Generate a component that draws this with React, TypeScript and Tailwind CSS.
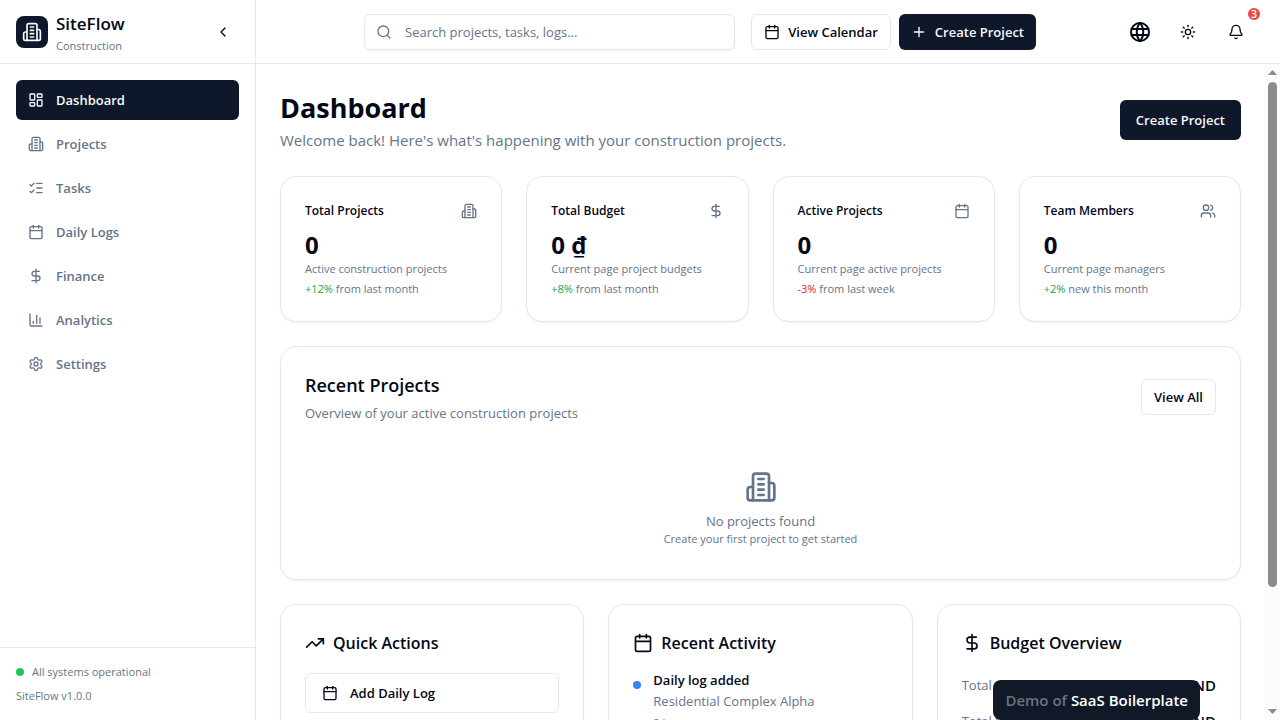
import type { ReactNode } from "react";
import {
  Bell,
  Calendar,
  ChartColumn,
  ChevronLeft,
  DollarSign,
  LayoutDashboard,
  ListChecks,
  Plus,
  Search,
  Settings,
  Sun,
  TrendingUp,
  Users,
} from "lucide-react";
import { TbWorld } from "react-icons/tb";

function Building({ className }: { className?: string }) {
  return (
    <svg
      className={className}
      viewBox="0 0 24 24"
      fill="none"
      stroke="currentColor"
      strokeWidth="2"
      strokeLinecap="round"
      strokeLinejoin="round"
      aria-hidden="true"
    >
      <path d="M6 22V4a2 2 0 0 1 2-2h8a2 2 0 0 1 2 2v18Z" />
      <path d="M6 12H4a2 2 0 0 0-2 2v6a2 2 0 0 0 2 2h2" />
      <path d="M18 9h2a2 2 0 0 1 2 2v9a2 2 0 0 1-2 2h-2" />
      <path d="M10 6h4M10 10h4M10 14h4M10 18h4" />
    </svg>
  );
}

const navItems = [
  { label: "Dashboard", icon: LayoutDashboard, active: true },
  { label: "Projects", icon: Building },
  { label: "Tasks", icon: ListChecks },
  { label: "Daily Logs", icon: Calendar },
  { label: "Finance", icon: DollarSign },
  { label: "Analytics", icon: ChartColumn },
  { label: "Settings", icon: Settings },
];

const stats = [
  { title: "Total Projects", icon: Building, value: "0", note: "Active construction projects", change: "+12%", since: "from last month", up: true },
  { title: "Total Budget", icon: DollarSign, value: "0 ₫", note: "Current page project budgets", change: "+8%", since: "from last month", up: true },
  { title: "Active Projects", icon: Calendar, value: "0", note: "Current page active projects", change: "-3%", since: "from last week", up: false },
  { title: "Team Members", icon: Users, value: "0", note: "Current page managers", change: "+2%", since: "new this month", up: true },
];

function Sidebar() {
  return (
    <aside className="flex w-64 shrink-0 flex-col border-r border-slate-200">
      <div className="flex h-16 shrink-0 items-center justify-between border-b border-slate-200 px-4">
        <div className="flex items-center gap-2">
          <div className="flex size-8 items-center justify-center rounded-lg bg-[#0f172a] text-slate-50">
            <Building className="size-5" />
          </div>
          <div>
            <div className="text-[17px] leading-7 font-semibold">SiteFlow</div>
            <div className="text-[11px] leading-4 text-[#64748b]">Construction</div>
          </div>
        </div>
        <button type="button" aria-label="Collapse sidebar" className="flex size-8 items-center justify-center rounded-md">
          <ChevronLeft className="size-4" />
        </button>
      </div>
      <nav className="flex flex-1 flex-col gap-1 p-4">
        {navItems.map(({ label, icon: Icon, active }) => (
          <a
            key={label}
            href="#"
            className={
              active
                ? "flex h-10 items-center gap-3 rounded-md bg-[#0f172a] px-3 text-[13px] leading-5 font-semibold text-slate-50"
                : "flex h-10 items-center gap-3 rounded-md px-3 text-[13px] leading-5 font-semibold text-[#64748b]"
            }
          >
            <Icon className="size-4" />
            {label}
          </a>
        ))}
      </nav>
      <div className="flex flex-col gap-2 border-t border-slate-200 p-4 text-[11px] leading-4 text-[#64748b]">
        <div className="flex items-center gap-2">
          <span className="size-2 rounded-full bg-[#22c55e]" />
          All systems operational
        </div>
        <div>SiteFlow v1.0.0</div>
      </div>
    </aside>
  );
}

function Header() {
  return (
    <header className="flex h-16 shrink-0 items-center border-b border-slate-200 px-6">
      <div className="flex flex-1 justify-center">
        <div className="flex w-full max-w-2xl items-center gap-4">
          <div className="relative flex-1">
            <Search className="absolute top-1/2 left-3 size-4 -translate-y-1/2 text-[#64748b]" />
            <input
              type="search"
              aria-label="Search"
              placeholder="Search projects, tasks, logs..."
              className="h-9 w-full rounded-md border border-slate-200 pr-3 pl-10 text-[13px] leading-5 shadow-xs placeholder:text-[#64748b]"
            />
          </div>
          <div className="flex gap-2">
            <button type="button" className="flex h-9 items-center gap-2 rounded-md border border-slate-200 px-3 text-[13px] leading-5 font-semibold whitespace-nowrap">
              <Calendar className="size-4" />
              View Calendar
            </button>
            <button type="button" className="flex h-9 items-center gap-2 rounded-md bg-[#0f172a] px-3 text-[13px] leading-5 font-semibold whitespace-nowrap text-slate-50">
              <Plus className="size-4" />
              Create Project
            </button>
          </div>
        </div>
      </div>
      <div className="flex gap-2">
        <button type="button" aria-label="Language" className="flex size-10 items-center justify-center">
          <TbWorld className="size-6" />
        </button>
        <button type="button" aria-label="Toggle theme" className="flex size-10 items-center justify-center">
          <Sun className="size-4" />
        </button>
        <button type="button" aria-label="Notifications" className="relative flex size-10 items-center justify-center">
          <Bell className="size-4" />
          <span className="absolute -top-1 -right-1 flex size-3 items-center justify-center rounded-full bg-[#ef4444] text-[11px] leading-3 font-semibold text-white">
            3
          </span>
        </button>
      </div>
    </header>
  );
}

function Card({ children }: { children: ReactNode }) {
  return <section className="rounded-2xl border border-slate-200 bg-white p-6 shadow-xs">{children}</section>;
}

function ScrollTrack() {
  return (
    <div aria-hidden="true" className="flex w-[15px] shrink-0 flex-col items-center bg-[#fcfcfc] py-1.5">
      <svg className="h-[5px] w-[9px]" viewBox="0 0 9 5">
        <path d="M4.500 0L9 5H0Z" fill="#8b8b8b" />
      </svg>
      <div className="mt-[7px] h-[505px] w-[9px] rounded-full bg-[#8b8b8b]" />
      <svg className="mt-auto h-[5px] w-[9px]" viewBox="0 0 9 5">
        <path d="M0 0H9L4.500 5Z" fill="#8b8b8b" />
      </svg>
    </div>
  );
}

export default function App() {
  return (
    <div className="flex h-screen overflow-hidden bg-white font-['Segoe_UI','Open_Sans',sans-serif] text-[#020817]">
      <Sidebar />
      <div className="flex min-w-0 flex-1 flex-col">
        <Header />
        <div className="flex min-h-0 flex-1">
          <main className="flex min-w-0 flex-1 flex-col gap-6 overflow-hidden p-6">
            <div className="flex items-center justify-between">
              <div className="flex flex-col">
                <h1 className="text-[27px] leading-10 font-bold">Dashboard</h1>
                <p className="text-[15px] leading-6 text-[#64748b]">
                  Welcome back! Here's what's happening with your construction projects.
                </p>
              </div>
              <button type="button" className="h-10 rounded-md bg-[#0f172a] px-4 text-[13px] leading-5 font-semibold text-slate-50">
                Create Project
              </button>
            </div>

            <div className="grid grid-cols-4 gap-6">
              {stats.map(({ title, icon: Icon, value, note, change, since, up }) => (
                <Card key={title}>
                  <div className="flex items-center justify-between pb-2">
                    <h2 className="text-xs leading-5 font-semibold">{title}</h2>
                    <Icon className="size-4 text-[#64748b]" />
                  </div>
                  <div className="text-2xl font-bold">{value}</div>
                  <p className="text-[11px] leading-4 text-[#64748b]">{note}</p>
                  <p className="mt-1 text-[11px] leading-4 text-[#64748b]">
                    <span className={up ? "text-[#16a34a]" : "text-[#dc2626]"}>{change}</span> {since}
                  </p>
                </Card>
              ))}
            </div>

            <Card>
              <div className="flex items-center justify-between">
                <div className="flex flex-col gap-1">
                  <h2 className="text-lg leading-7 font-semibold">Recent Projects</h2>
                  <p className="text-[13px] leading-5 text-[#64748b]">Overview of your active construction projects</p>
                </div>
                <button type="button" className="h-9 rounded-md border border-slate-200 px-3 text-[13px] leading-5 font-semibold">
                  View All
                </button>
              </div>
              <div className="flex flex-col items-center pt-12 pb-2 text-[#64748b]">
                <Building className="mb-2 size-8" />
                <p className="text-[13px] leading-5">No projects found</p>
                <p className="text-[11px] leading-4">Create your first project to get started</p>
              </div>
            </Card>

            <div className="grid grid-cols-3 gap-6">
              <Card>
                <h2 className="mb-4 flex items-center gap-2 text-base leading-7 font-semibold">
                  <TrendingUp className="size-5" />
                  Quick Actions
                </h2>
                <button type="button" className="flex h-10 w-full items-center gap-3 rounded-md border border-slate-200 px-4 text-[13px] leading-5 font-semibold">
                  <Calendar className="size-4" />
                  Add Daily Log
                </button>
              </Card>
              <Card>
                <h2 className="mb-4 flex items-center gap-2 text-base leading-7 font-semibold">
                  <Calendar className="size-5" />
                  Recent Activity
                </h2>
                <div className="flex gap-3">
                  <span className="mt-2 size-2 rounded-full bg-[#3b82f6]" />
                  <div className="flex flex-col gap-1">
                    <p className="text-[13px] leading-[14px] font-semibold">Daily log added</p>
                    <p className="text-[13px] leading-5 text-[#64748b]">Residential Complex Alpha</p>
                    <p className="text-[11px] leading-4 text-[#64748b]">2 hours ago</p>
                  </div>
                </div>
              </Card>
              <Card>
                <h2 className="mb-4 flex items-center gap-2 text-base leading-7 font-semibold">
                  <DollarSign className="size-5" />
                  Budget Overview
                </h2>
                <dl className="flex flex-col gap-3">
                  <div className="flex items-center justify-between">
                    <dt className="text-[13px] leading-5 text-[#64748b]">Total Budget</dt>
                    <dd className="text-[15px] leading-6 font-semibold">0 VND</dd>
                  </div>
                  <div className="flex items-center justify-between">
                    <dt className="text-[13px] leading-5 text-[#64748b]">Total Spent</dt>
                    <dd className="text-[15px] leading-6 font-semibold">0 VND</dd>
                  </div>
                </dl>
              </Card>
            </div>
          </main>
          <ScrollTrack />
        </div>
      </div>
      <a href="#" className="fixed right-20 bottom-0 rounded-lg bg-[#111827] px-3 py-2 text-[15px] leading-6 font-semibold text-[#6b7280]">
        Demo of <span className="text-white">SaaS Boilerplate</span>
      </a>
    </div>
  );
}
